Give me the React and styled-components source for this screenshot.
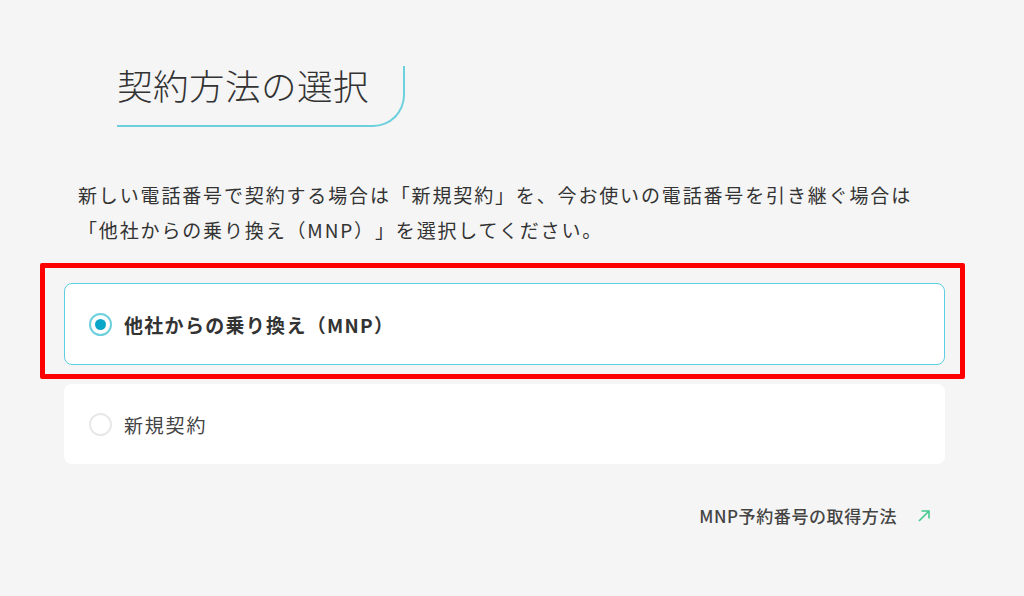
import React from "react";
import styled, { createGlobalStyle } from "styled-components";

const GlobalStyle = createGlobalStyle`
  body {
    margin: 0;
    background: #f5f5f5;
    font-family: "Noto Sans CJK JP", "Noto Sans", sans-serif;
    color: #333;
    text-spacing-trim: space-all;
  }
`;

const options = [
  { id: "mnp", label: "他社からの乗り換え（MNP）", checked: true },
  { id: "new", label: "新規契約", checked: false },
];

const App = () => {
  return (
    <Page>
      <GlobalStyle />
      <Title>契約方法の選択</Title>
      <Lead>
        新しい電話番号で契約する場合は「新規契約」を、今お使いの電話番号を引き継ぐ場合は
        <br />
        「他社からの乗り換え（MNP）」を選択してください。
      </Lead>
      <Options>
        {options.map((opt) => (
          <OptionWrap key={opt.id}>
            <OptionCard $checked={opt.checked}>
              <Radio $checked={opt.checked} />
              <OptionLabel $checked={opt.checked}>{opt.label}</OptionLabel>
            </OptionCard>
            {opt.checked && <Highlight />}
          </OptionWrap>
        ))}
      </Options>
      <LinkRow>
        <HelpLink href="#">
          MNP予約番号の取得方法
          <svg width="14" height="14" viewBox="0 0 14 14" fill="none">
            <path d="M2 12L12 2M4.5 2H12V9.5" stroke="#46c98f" strokeWidth="1.6" />
          </svg>
        </HelpLink>
      </LinkRow>
    </Page>
  );
};

const Page = styled.main`
  width: 881px;
  padding: 66px 0 0 64px;
`;

const Title = styled.h1`
  display: inline-block;
  margin: 0 0 0 53px;
  padding: 1px 34px 22px 0;
  font-size: 35.5px;
  line-height: 36px;
  font-weight: 300;
  color: #333;
  letter-spacing: 0.5px;
  border-bottom: 2px solid #6dd0dd;
  border-right: 2px solid #6dd0dd;
  border-bottom-right-radius: 32px;
`;

const Lead = styled.p`
  margin: 50px 0 0 14px;
  font-size: 19px;
  line-height: 35px;
  letter-spacing: 1.85px;
  color: #333;
`;

const Options = styled.div`
  margin-top: 36px;
  display: flex;
  flex-direction: column;
  gap: 19px;
`;

const OptionWrap = styled.div`
  position: relative;
`;

const OptionCard = styled.label`
  display: flex;
  align-items: center;
  gap: 12px;
  height: 80px;
  padding: 0 ${(p) => (p.$checked ? "24px" : "25px")};
  background: #fff;
  border: ${(p) => (p.$checked ? "1px solid #5ccfe0" : "none")};
  border-radius: 8px;
`;

const Radio = styled.span`
  box-sizing: border-box;
  width: 23px;
  height: 23px;
  border-radius: 50%;
  border: 2px solid ${(p) => (p.$checked ? "#6dd0dd" : "#e8e8e8")};
  display: flex;
  align-items: center;
  justify-content: center;
  &::after {
    content: "";
    width: 11px;
    height: 11px;
    border-radius: 50%;
    background: ${(p) => (p.$checked ? "#0aa6c8" : "transparent")};
  }
`;

const OptionLabel = styled.span`
  font-size: 19px;
  font-weight: ${(p) => (p.$checked ? 700 : 400)};
  letter-spacing: ${(p) => (p.$checked ? "1.3px" : "1.8px")};
  color: ${(p) => (p.$checked ? "#333" : "#444")};
`;

const Highlight = styled.div`
  position: absolute;
  top: -20px;
  left: -24px;
  right: -20px;
  bottom: -14px;
  border: 5px solid #ff0000;
  border-radius: 2px;
  pointer-events: none;
`;

const LinkRow = styled.div`
  display: flex;
  justify-content: flex-end;
  margin-top: 40px;
  padding-right: 14px;
`;

const HelpLink = styled.a`
  display: flex;
  align-items: center;
  gap: 20px;
  font-size: 17px;
  line-height: 24px;
  font-weight: 500;
  letter-spacing: 0.6px;
  color: #444;
  text-decoration: none;
`;

export default App;
